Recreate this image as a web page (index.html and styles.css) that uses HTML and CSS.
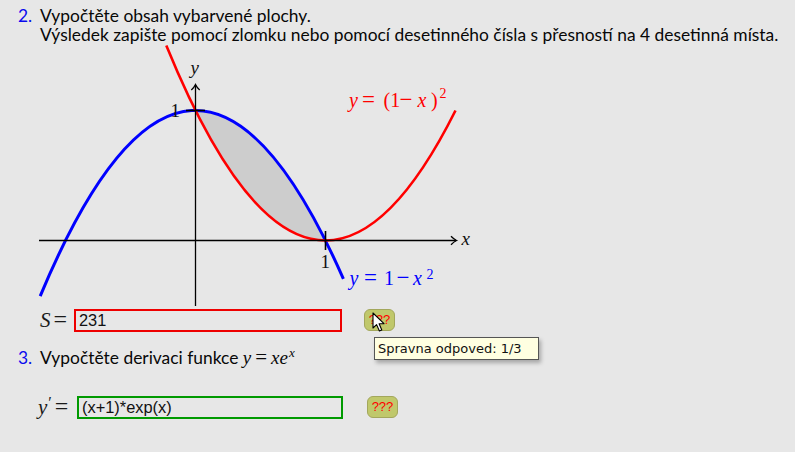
FILE: index.html
```html
<!DOCTYPE html>
<html lang="cs">
<head>
<meta charset="utf-8">
<title>Úlohy</title>
<link rel="stylesheet" href="styles.css">
</head>
<body>
<main class="page">
  <div class="q">
    <span class="num">2.</span>
    <div class="qtext">
      <p>Vypočtěte obsah vybarvené plochy.</p>
      <p>Výsledek zapište pomocí zlomku nebo pomocí desetinného čísla s přesností na 4 desetinná místa.</p>
    </div>
  </div>

  <svg class="chart" width="480" height="264" viewBox="0 44 480 264" xmlns="http://www.w3.org/2000/svg">
    <path d="M195.5,110.5 Q260.5,110.5 325.5,240.5 Q260.5,240.5 195.5,110.5 Z" fill="#cdcdcd"/>
    <path d="M40.2,296.1 Q191.8,-66.3 343.4,278.9" fill="none" stroke="#0000ff" stroke-width="3"/>
    <path d="M166.3,45.5 Q310.9,399.6 455.5,110.5" fill="none" stroke="#ff0000" stroke-width="2.6"/>
    <g stroke="#000" stroke-width="1.3" fill="none">
      <line x1="39" y1="240.5" x2="456" y2="240.5"/>
      <path d="M451,236.3 Q454,239.4 456.6,240.5 Q454,241.6 451,244.7"/>
      <line x1="195.5" y1="306" x2="195.5" y2="85.5"/>
      <path d="M191.3,90 Q194.4,87.2 195.5,84.6 Q196.6,87.2 199.7,90"/>
      <line x1="186" y1="110.5" x2="205" y2="110.5" stroke-width="1.6"/>
      <line x1="325.5" y1="231" x2="325.5" y2="250" stroke-width="1.6"/>
    </g>
    <g class="m" font-size="19" fill="#111">
      <text x="190.5" y="74" class="mi">y</text>
      <text x="461.5" y="245" class="mi">x</text>
      <text x="170.5" y="117">1</text>
      <text x="320.5" y="268">1</text>
    </g>
    <g class="m" font-size="20" fill="#ff0000">
      <text x="349" y="107" class="mi">y</text>
      <text x="362" y="107" class="op">=</text>
      <text x="383.5" y="107">(1</text>
      <text x="399.5" y="107" class="op">−</text>
      <text x="417.5" y="107" class="mi">x</text>
      <text x="431" y="107">)</text>
      <text x="439.5" y="98" font-size="14">2</text>
    </g>
    <g class="m" font-size="20" fill="#0000ff">
      <text x="349.5" y="285" class="mi">y</text>
      <text x="364" y="285" class="op">=</text>
      <text x="384" y="285">1</text>
      <text x="396.5" y="285" class="op">−</text>
      <text x="413" y="285" class="mi">x</text>
      <text x="426.5" y="279" font-size="14">2</text>
    </g>
  </svg>

  <div class="answer a1">
    <span class="lhs"><i>S</i><span class="eq">=</span></span>
    <span class="box box-red">231</span>
    <span class="btn">???</span>
    <svg class="cursor" width="14" height="21" viewBox="0 0 14 21" xmlns="http://www.w3.org/2000/svg">
      <path d="M1,1 L1,16 L4.6,12.6 L7.4,19 L9.8,18 L7.1,11.7 L12,11.7 Z" fill="#fff" stroke="#000" stroke-width="1.1" stroke-linejoin="round"/>
    </svg>
    <div class="tooltip">Spravna odpoved: 1/3</div>
  </div>

  <div class="q q3">
    <span class="num">3.</span>
    <div class="qtext">
      <p>Vypočtěte derivaci funkce <span class="math"><i>y</i><span class="eq">=</span><i>xe</i><sup><i>x</i></sup></span></p>
    </div>
  </div>

  <div class="answer a2">
    <span class="lhs"><i>y</i><span class="prime">′</span><span class="eq">=</span></span>
    <span class="box box-green">(x+1)*exp(x)</span>
    <span class="btn">???</span>
  </div>
</main>
</body>
</html>
```

FILE: styles.css
```css
html, body {
  margin: 0;
  padding: 0;
  background: #e7e7e7;
}

.page {
  width: 795px;
  height: 452px;
  box-sizing: border-box;
  padding-top: 6px;
  font-family: Lato, "Noto Sans", sans-serif;
  font-size: 17.4px;
  line-height: 19px;
  color: #080808;
  overflow: hidden;
}

.q {
  display: flex;
  padding-left: 18px;
}

.num {
  width: 22px;
  flex: none;
  color: #0a0aee;
}

.qtext p {
  margin: 0;
  white-space: nowrap;
}

.chart {
  display: block;
}

.m text {
  font-family: "Liberation Serif", serif;
}

.m .mi {
  font-style: italic;
}

.m .op {
  font-size: 23px;
}

.answer {
  position: relative;
  display: flex;
  align-items: center;
  height: 24px;
}

.a1 {
  padding-left: 40px;
}

.a2 {
  margin-top: 28px;
  padding-left: 38px;
}

.lhs {
  display: flex;
  align-items: baseline;
  font-family: "Liberation Serif", serif;
  font-size: 21px;
  color: #1a1a1a;
}

.a1 .lhs {
  width: 34px;
}

.a2 .lhs {
  width: 39px;
}

.lhs .eq {
  margin-left: 3px;
  font-size: 24px;
}

.prime {
  font-size: 16px;
  margin-left: 1px;
  position: relative;
  top: -6px;
}

.box {
  box-sizing: border-box;
  height: 23px;
  border: 2px solid;
  padding-left: 3px;
  font-family: "Liberation Sans", Arial, sans-serif;
  font-size: 16.4px;
  line-height: 19px;
  color: #111;
}

.box-red {
  width: 268px;
  border-color: #ee0000;
}

.box-green {
  width: 266px;
  border-color: #009a00;
}

.btn {
  box-sizing: border-box;
  width: 31px;
  height: 22px;
  border: 1px solid #a3a75c;
  border-radius: 6px;
  background: #c0c86b;
  color: #ff0000;
  font-family: "Liberation Sans", Arial, sans-serif;
  font-size: 13px;
  line-height: 20px;
  text-align: center;
}

.a1 .btn {
  margin-left: 22px;
}

.a2 .btn {
  margin-left: 24px;
}

.q3 {
  margin-top: 16px;
}

.math {
  font-family: "Liberation Serif", serif;
  font-size: 19px;
}

.math .eq {
  margin: 0 4px;
  font-size: 21px;
}

.math sup {
  font-size: 13px;
  line-height: 0;
  margin-left: 1px;
}

.cursor {
  position: absolute;
  left: 372px;
  top: 4px;
}

.tooltip {
  position: absolute;
  left: 374px;
  top: 29px;
  box-sizing: border-box;
  width: 165px;
  height: 23px;
  padding-left: 3px;
  border: 1px solid #555;
  background: #ffffe1;
  box-shadow: 2px 3px 4px rgba(0, 0, 0, 0.28);
  font-family: "DejaVu Sans", sans-serif;
  font-size: 13px;
  line-height: 21px;
  color: #111;
}
```
